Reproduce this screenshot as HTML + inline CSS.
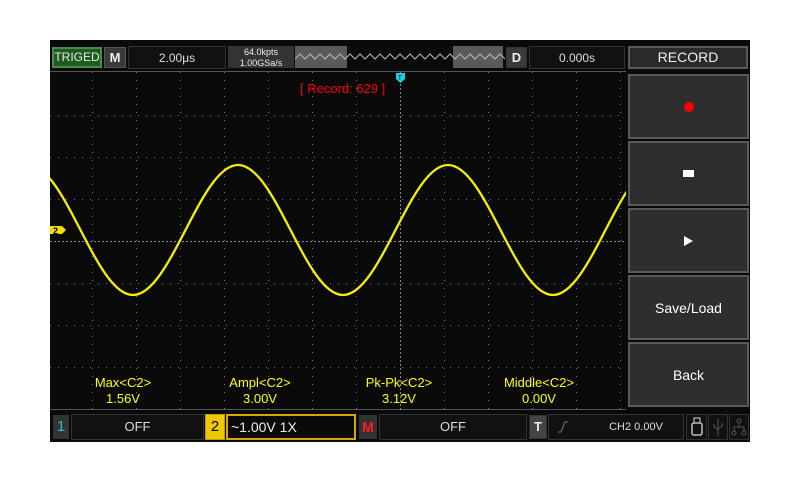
<!DOCTYPE html>
<html><head><meta charset="utf-8"><style>
*{margin:0;padding:0;box-sizing:border-box}
body{width:800px;height:480px;background:#fff;position:relative;overflow:hidden;font-family:"Liberation Sans",sans-serif}
.a{position:absolute}
.scr{left:50px;top:40px;width:700px;height:402px;background:#0a0a0a}
.box{position:absolute;background:#181818;color:#ddd;font-size:13px;text-align:center;border:1px solid #333}
.btn{position:absolute;left:628px;width:121px;background:#2e2e2e;border:2px solid #5a5a5a;color:#fff;font-size:14px;display:flex;align-items:center;justify-content:center}
.m{position:absolute;color:#ffff00;font-size:13px;text-align:center;width:120px;line-height:16px}
</style></head><body>
<div class="a scr"></div>
<!-- top bar -->
<div class="box" style="left:52px;top:47px;width:50px;height:21px;background:#1f5a1f;border:2px solid #4a8a4a;color:#e8e8e8;line-height:17px;font-size:12px">TRIGED</div>
<div class="box" style="left:104px;top:47px;width:22px;height:21px;background:#3a3a3a;border:1px solid #555;font-weight:bold;line-height:19px;color:#eee">M</div>
<div class="box" style="left:128px;top:46px;width:98px;height:23px;background:#111;line-height:22px;font-size:12px">2.00μs</div>
<div class="box" style="left:228px;top:46px;width:66px;height:11px;background:#333;font-size:9px;line-height:10px;color:#eee">64.0kpts</div>
<div class="box" style="left:228px;top:57px;width:66px;height:11px;background:#333;font-size:9px;line-height:10px;color:#eee">1.00GSa/s</div>
<div class="box" style="left:295px;top:46px;width:52px;height:22px;background:#5a5a5a;border:none"></div>
<div class="box" style="left:453px;top:46px;width:50px;height:22px;background:#5a5a5a;border:none"></div>
<svg class="a" style="left:295px;top:46px" width="210" height="22"><polyline fill="none" stroke="#bbb" stroke-width="1" points="0,13 5,8 10,13 15,8 20,13 25,8 30,13 35,8 40,13 45,8 50,13 55,8 60,13 65,8 70,13 75,8 80,13 85,8 90,13 95,8 100,13 105,8 110,13 115,8 120,13 125,8 130,13 135,8 140,13 145,8 150,13 155,8 160,13 165,8 170,13 175,8 180,13 185,8 190,13 195,8 200,13 205,8 210,13"/></svg>
<div class="box" style="left:506px;top:47px;width:21px;height:21px;background:#3a3a3a;font-weight:bold;line-height:19px;color:#eee">D</div>
<div class="box" style="left:529px;top:46px;width:96px;height:23px;background:#111;line-height:22px;font-size:12px">0.000s</div>
<div class="box" style="left:628px;top:46px;width:120px;height:23px;background:#2a2a2a;border:2px solid #5a5a5a;line-height:19px;font-size:14px;color:#eee">RECORD</div>
<!-- graph -->
<svg class="a" style="left:0;top:0" width="800" height="480">
<defs><clipPath id="c"><rect x="50" y="72" width="576" height="338"/></clipPath>
<pattern id="vd" width="1" height="8" patternUnits="userSpaceOnUse"><rect width="1" height="1" fill="#777"/></pattern></defs>
<rect x="50" y="71" width="576" height="1" fill="#555"/>
<rect x="50" y="409" width="576" height="1" fill="#555"/>
<g fill="#6a6a6a" clip-path="url(#c)">
<g id="v">
<rect x="92" y="72" width="1" height="338" fill="url(#vd)"/><rect x="136" y="72" width="1" height="338" fill="url(#vd)"/><rect x="180" y="72" width="1" height="338" fill="url(#vd)"/><rect x="224" y="72" width="1" height="338" fill="url(#vd)"/><rect x="268" y="72" width="1" height="338" fill="url(#vd)"/><rect x="312" y="72" width="1" height="338" fill="url(#vd)"/><rect x="356" y="72" width="1" height="338" fill="url(#vd)"/><rect x="444" y="72" width="1" height="338" fill="url(#vd)"/><rect x="488" y="72" width="1" height="338" fill="url(#vd)"/><rect x="532" y="72" width="1" height="338" fill="url(#vd)"/><rect x="576" y="72" width="1" height="338" fill="url(#vd)"/><rect x="620" y="72" width="1" height="338" fill="url(#vd)"/>
</g>
</g>
<g stroke="#777" stroke-width="1" stroke-dasharray="1 7" clip-path="url(#c)">
<line x1="50" y1="115.5" x2="626" y2="115.5"/><line x1="50" y1="157.5" x2="626" y2="157.5"/><line x1="50" y1="199.5" x2="626" y2="199.5"/><line x1="50" y1="283.5" x2="626" y2="283.5"/><line x1="50" y1="325.5" x2="626" y2="325.5"/><line x1="50" y1="367.5" x2="626" y2="367.5"/>
</g>
<line x1="50" y1="241.5" x2="626" y2="241.5" stroke="#888" stroke-dasharray="2 2"/>
<line x1="400.5" y1="72" x2="400.5" y2="410" stroke="#888" stroke-dasharray="2 2"/>
<path clip-path="url(#c)" fill="none" stroke="#f5f000" stroke-width="2.3" d="M28,165 C65.8,165 95.2,295 133,295 C170.8,295 200.2,165 238,165 C275.8,165 305.2,295 343,295 C380.8,295 410.2,165 448,165 C485.8,165 515.2,295 553,295 C590.8,295 620.2,165 658,165"/>
<path d="M50,226 h12 l4,4 l-4,4 h-12z" fill="#f0e000"/>
<text x="53" y="234" font-size="9" font-weight="bold" fill="#000" font-family="Liberation Sans">2</text>
<path d="M396,73 h9 v6 l-4.5,4 l-4.5,-4z" fill="#1fd0e0"/>
<text x="398" y="80" font-size="6" fill="#000" font-family="Liberation Sans">T</text>
</svg>
<div class="a" style="left:300px;top:81px;color:#ff0000;font-size:13px">[ Record: 629 ]</div>
<div class="m" style="left:63px;top:375px">Max&lt;C2&gt;<br>1.56V</div>
<div class="m" style="left:200px;top:375px">Ampl&lt;C2&gt;<br>3.00V</div>
<div class="m" style="left:339px;top:375px">Pk-Pk&lt;C2&gt;<br>3.12V</div>
<div class="m" style="left:479px;top:375px">Middle&lt;C2&gt;<br>0.00V</div>
<!-- right menu -->
<div class="btn" style="top:74px;height:65px"><span style="width:10px;height:10px;border-radius:50%;background:#ff0000;display:block"></span></div>
<div class="btn" style="top:141px;height:65px"><span style="width:11px;height:7px;background:#fff;display:block"></span></div>
<div class="btn" style="top:208px;height:65px"><span style="width:0;height:0;border-left:9px solid #fff;border-top:5px solid transparent;border-bottom:5px solid transparent;display:block"></span></div>
<div class="btn" style="top:275px;height:65px">Save/Load</div>
<div class="btn" style="top:342px;height:65px">Back</div>
<!-- bottom bar -->
<div class="box" style="left:53px;top:415px;width:16px;height:24px;background:#333;color:#20c0d0;font-size:15px;line-height:22px">1</div>
<div class="box" style="left:71px;top:414px;width:133px;height:26px;background:#111;line-height:24px">OFF</div>
<div class="box" style="left:205px;top:414px;width:20px;height:26px;background:#f0c800;border:1px solid #c0a000;color:#000;font-size:15px;line-height:24px">2</div>
<div class="box" style="left:226px;top:414px;width:130px;height:26px;background:#0a0a0a;border:2px solid #d8a800;text-align:left;padding-left:3px;line-height:22px;font-size:14px;color:#eee">~1.00V 1X</div>
<div class="box" style="left:359px;top:415px;width:18px;height:24px;background:#333;color:#ff2020;font-weight:bold;font-size:14px;line-height:22px">M</div>
<div class="box" style="left:379px;top:414px;width:148px;height:26px;background:#111;line-height:24px">OFF</div>
<div class="box" style="left:529px;top:415px;width:18px;height:24px;background:#444;color:#eee;font-weight:bold;line-height:22px">T</div>
<div class="box" style="left:548px;top:414px;width:136px;height:26px;background:#111;line-height:24px;font-size:11px;padding-left:40px">CH2 0.00V</div>
<svg class="a" style="left:556px;top:419px" width="14" height="16"><path d="M2,13 h3 l4,-10 h3" fill="none" stroke="#777"/></svg>
<div class="box" style="left:686px;top:414px;width:21px;height:26px;background:#111"></div>
<div class="box" style="left:708px;top:414px;width:20px;height:26px;background:#111"></div>
<div class="box" style="left:729px;top:414px;width:20px;height:26px;background:#111"></div>
<svg class="a" style="left:686px;top:414px" width="64" height="26">
<rect x="8" y="4" width="6" height="5" fill="none" stroke="#ddd"/><rect x="6" y="9" width="10" height="12" rx="2" fill="none" stroke="#ddd" stroke-width="1.3"/>
<g stroke="#555" fill="none"><line x1="32" y1="5" x2="32" y2="22"/><path d="M28,10 v3 l4,3 M36,9 v3 l-4,3"/></g>
<g stroke="#555" fill="none"><circle cx="53" cy="7" r="2"/><circle cx="48" cy="19" r="2"/><circle cx="58" cy="19" r="2"/><path d="M53,9 v4 M48,17 v-4 h10 v4"/></g>
</svg>
</body></html>
